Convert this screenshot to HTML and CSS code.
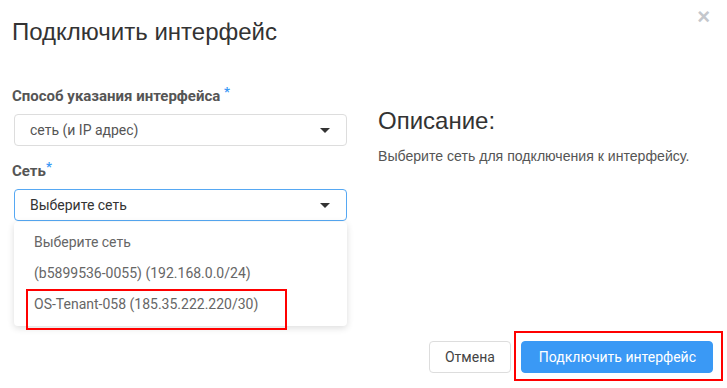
FILE: index.html
```html
<!DOCTYPE html>
<html lang="ru">
<head>
  <meta charset="UTF-8">
  <title>Подключить интерфейс</title>
  <link rel="stylesheet" href="styles.css">
</head>
<body>
  <div class="modal">
    <div class="modal-header">
      <h4>Подключить интерфейс</h4>
      <span class="close">&times;</span>
    </div>

    <div class="modal-body">
      <div class="col-form">
        <div class="form-group">
          <label>Способ указания интерфейса <span class="req">*</span></label>
          <div class="select">сеть (и IP адрес)<span class="caret"></span></div>
        </div>

        <div class="form-group">
          <label>Сеть<span class="req">*</span></label>
          <div class="dropdown">
            <div class="select focus">Выберите сеть<span class="caret"></span></div>
            <ul class="menu">
              <li>Выберите сеть</li>
              <li>(b5899536-0055) (192.168.0.0/24)</li>
              <li>OS-Tenant-058 (185.35.222.220/30)</li>
            </ul>
            <div class="mark mark-item"></div>
          </div>
        </div>

        <!-- поле под выпадающим списком -->
        <div class="form-group">
          <label class="hidden-label"></label>
          <div class="select"></div>
        </div>
      </div>

      <div class="col-help">
        <h3>Описание:</h3>
        <p>Выберите сеть для подключения к интерфейсу.</p>
      </div>
    </div>

    <div class="modal-footer">
      <div class="btn">Отмена</div>
      <div class="btn-wrap">
        <div class="btn btn-primary">Подключить интерфейс</div>
        <div class="mark mark-btn"></div>
      </div>
    </div>
  </div>
</body>
</html>
```

FILE: styles.css
```css
body {
  margin: 0;
  background: #fff;
  font-family: Roboto, sans-serif;
  color: #333;
}
.modal {
  width: 727px;
  height: 388px;
  position: relative;
}
.modal-header {
  padding: 19px 12px 0;
  height: 63px;
}
.modal-header h4 {
  margin: 0;
  font-family: "Liberation Sans", Arial, sans-serif;
  font-weight: normal;
  font-size: 24px;
  line-height: 1.1;
  color: #333;
}
.close {
  position: absolute;
  top: 4px;
  right: 17px;
  font-family: "Liberation Sans", Arial, sans-serif;
  font-size: 22px;
  font-weight: bold;
  color: #c4c7cc;
}
.modal-body {
  display: grid;
  grid-template-columns: 333px 1fr;
  gap: 31px;
  padding: 0 14px;
}
.form-group {
  margin-bottom: 11px;
}
.form-group label {
  display: block;
  margin-left: -2px;
  font-weight: bold;
  font-size: 15px;
  line-height: 20px;
  color: #555;
  margin-bottom: 8px;
}
.form-group .hidden-label {
  height: 20px;
}
.req {
  color: #3a99f5;
  vertical-align: 5px;
  font-size: 13px;
}
.select {
  position: relative;
  box-sizing: border-box;
  height: 32px;
  border: 1px solid #ddd;
  border-radius: 4px;
  padding: 0 15px;
  font-size: 14px;
  line-height: 30px;
  color: #555;
}
.select.focus {
  border-color: #56a8f3;
  color: #333;
}
.caret {
  position: absolute;
  right: 16px;
  top: 13px;
  border-left: 5px solid transparent;
  border-right: 5px solid transparent;
  border-top: 5px solid #333;
}
.dropdown {
  position: relative;
}
.menu {
  position: absolute;
  top: 33px;
  left: 0;
  width: 333px;
  box-sizing: border-box;
  margin: 0;
  padding: 5px 0 6px;
  list-style: none;
  background: #fff;
  border-radius: 4px;
  box-shadow: 0 2px 7px rgba(0, 0, 0, 0.14);
  z-index: 2;
}
.menu li {
  padding: 5px 20px 6px;
  font-size: 14px;
  line-height: 20px;
  color: #666;
}
.mark {
  position: absolute;
  border: 2px solid #f00;
  z-index: 3;
}
.mark-item {
  left: 12px;
  top: 100px;
  width: 257px;
  height: 37px;
}
.col-help h3 {
  margin: 26px 0 0;
  font-family: "Liberation Sans", Arial, sans-serif;
  font-weight: normal;
  font-size: 24px;
  line-height: 1.1;
  color: #333;
}
.col-help p {
  margin: 12px 0 0;
  font-family: "Liberation Sans", Arial, sans-serif;
  font-size: 14.1px;
  line-height: 20px;
  color: #555;
}
.modal-footer {
  position: absolute;
  left: 0;
  right: 0;
  top: 341px;
  display: flex;
  justify-content: flex-end;
  gap: 10px;
  padding-right: 14px;
}
.btn {
  box-sizing: border-box;
  height: 32px;
  padding: 0 15px;
  border: 1px solid #ddd;
  border-radius: 4px;
  font-size: 14px;
  line-height: 30px;
  color: #444;
  background: #fff;
}
.btn-wrap {
  position: relative;
}
.btn-primary {
  background: #3a99f5;
  border-color: #3a99f5;
  color: #fff;
  padding: 0 16px 0 17px;
}
.mark-btn {
  left: -7px;
  top: -10px;
  right: -10px;
  bottom: -8px;
}
```
